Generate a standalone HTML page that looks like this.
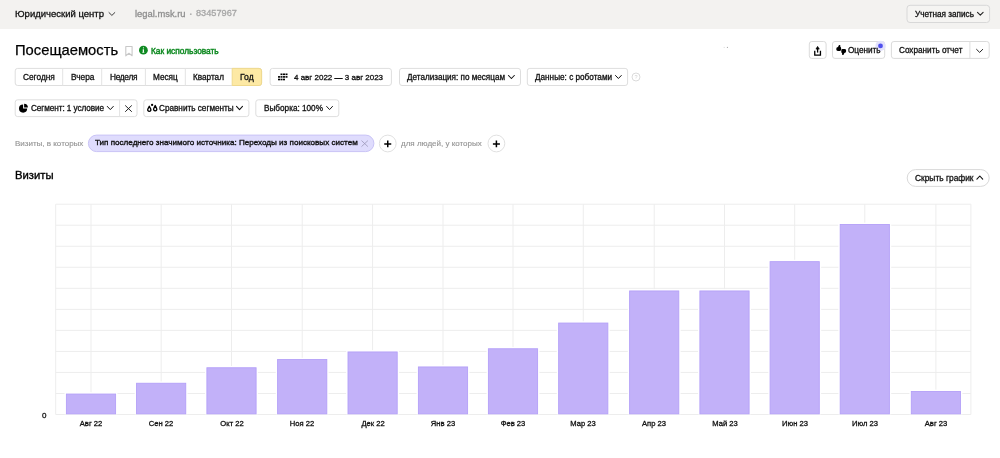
<!DOCTYPE html>
<html><head><meta charset="utf-8"><style>
html,body{margin:0;padding:0;width:1000px;height:458px;overflow:hidden;background:#fff}
body{position:relative;font-family:"Liberation Sans",sans-serif}
.t{position:absolute;white-space:nowrap;will-change:transform}
.b{position:absolute;box-sizing:border-box}
.i{position:absolute;overflow:visible}
</style></head><body>
<div class="b" style="left:0.00px;top:0.00px;width:1000.00px;height:29.00px;background:#f3f2f0;"></div>
<svg class="i" style="left:0;top:0" width="1000" height="458" viewBox="0 0 1000 458"><rect x="907.00" y="5.30" width="82.60" height="17.20" rx="3" fill="#f5f4f2" stroke="#d8d8d8" stroke-width="1.0"/><rect x="809.30" y="41.50" width="16.80" height="16.90" rx="2.5" fill="#fff" stroke="#dbdbdb" stroke-width="1.0"/><rect x="832.50" y="41.50" width="52.20" height="16.90" rx="2.5" fill="#fff" stroke="#dbdbdb" stroke-width="1.0"/><circle cx="880.5" cy="45.9" r="5.1" fill="#e2e1fc"/><rect x="891.40" y="41.50" width="97.80" height="16.90" rx="2.5" fill="#fff" stroke="#dbdbdb" stroke-width="1.0"/><line x1="969.90" y1="41.50" x2="969.90" y2="58.40" stroke="#dedede" stroke-width="1.0"/><rect x="15.20" y="68.40" width="246.40" height="17.10" rx="2.5" fill="#fff" stroke="#dedede" stroke-width="1.0"/><path d="M232.2 68.40 H259.1 A2.5 2.5 0 0 1 261.6 70.90 V83.00 A2.5 2.5 0 0 1 259.1 85.50 H232.2 Z" fill="#fde9a4" stroke="#efd98d" stroke-width="1"/><line x1="62.70" y1="68.40" x2="62.70" y2="85.50" stroke="#e3e3e3" stroke-width="1.0"/><line x1="101.70" y1="68.40" x2="101.70" y2="85.50" stroke="#e3e3e3" stroke-width="1.0"/><line x1="145.40" y1="68.40" x2="145.40" y2="85.50" stroke="#e3e3e3" stroke-width="1.0"/><line x1="185.30" y1="68.40" x2="185.30" y2="85.50" stroke="#e3e3e3" stroke-width="1.0"/><rect x="270.10" y="68.40" width="121.30" height="17.10" rx="2.5" fill="#fff" stroke="#dedede" stroke-width="1.0"/><rect x="399.50" y="68.40" width="121.00" height="17.10" rx="2.5" fill="#fff" stroke="#dedede" stroke-width="1.0"/><rect x="527.30" y="68.40" width="100.30" height="17.10" rx="2.5" fill="#fff" stroke="#dedede" stroke-width="1.0"/><rect x="15.20" y="99.80" width="121.80" height="16.80" rx="2.5" fill="#fff" stroke="#dedede" stroke-width="1.0"/><line x1="119.60" y1="99.80" x2="119.60" y2="116.60" stroke="#e3e3e3" stroke-width="1.0"/><rect x="143.80" y="99.80" width="105.10" height="16.80" rx="2.5" fill="#fff" stroke="#dedede" stroke-width="1.0"/><rect x="255.80" y="99.80" width="83.00" height="16.80" rx="2.5" fill="#fff" stroke="#dedede" stroke-width="1.0"/><rect x="88.40" y="135.10" width="285.50" height="16.50" rx="8.2" fill="#dfdcfd" stroke="#c9c3f6" stroke-width="1.0"/><rect x="907.20" y="169.60" width="82.00" height="16.80" rx="8.4" fill="#fff" stroke="#d9d9d9" stroke-width="1.0"/></svg>
<div class="t" style="left:15.00px;top:8.59px;font-size:9.5px;line-height:9.5px;color:#111;font-weight:400;letter-spacing:0px;-webkit-text-stroke:0.3px #111;">Юридический центр</div>
<div class="t" style="left:134.60px;top:8.81px;font-size:9.4px;line-height:9.4px;color:#8e8e8e;font-weight:400;letter-spacing:0px;-webkit-text-stroke:0.3px #8e8e8e;">legal.msk.ru</div>
<div class="t" style="left:196.00px;top:9.24px;font-size:9.2px;line-height:9.2px;color:#a6a6a6;font-weight:400;letter-spacing:0px;-webkit-text-stroke:0.3px #a6a6a6;">83457967</div>

<div class="t" style="left:914.80px;top:10.60px;font-size:8.2px;line-height:8.2px;color:#111;font-weight:400;letter-spacing:0px;-webkit-text-stroke:0.3px #111;">Учетная запись</div>
<div class="t" style="left:14.90px;top:42.76px;font-size:14.75px;line-height:14.75px;color:#000;font-weight:400;letter-spacing:0px;-webkit-text-stroke:0.25px #000;">Посещаемость</div>
<div class="t" style="left:150.70px;top:46.68px;font-size:8.33px;line-height:8.33px;color:#0f8a22;font-weight:400;letter-spacing:0px;-webkit-text-stroke:0.45px #0f8a22;">Как использовать</div>


<div class="t" style="left:848.00px;top:46.90px;font-size:8.2px;line-height:8.2px;color:#111;font-weight:400;letter-spacing:0px;-webkit-text-stroke:0.3px #111;">Оценить</div>

<div class="t" style="left:899.00px;top:46.90px;font-size:8.2px;line-height:8.2px;color:#111;font-weight:400;letter-spacing:0px;-webkit-text-stroke:0.3px #111;">Сохранить отчет</div>

<div class="t" style="left:23.00px;top:73.48px;font-size:8.3px;line-height:8.3px;color:#111;font-weight:400;letter-spacing:0px;-webkit-text-stroke:0.3px #111;">Сегодня</div>
<div class="t" style="left:70.70px;top:73.48px;font-size:8.3px;line-height:8.3px;color:#111;font-weight:400;letter-spacing:0px;-webkit-text-stroke:0.3px #111;">Вчера</div>
<div class="t" style="left:109.50px;top:73.48px;font-size:8.3px;line-height:8.3px;color:#111;font-weight:400;letter-spacing:-0.3px;-webkit-text-stroke:0.3px #111;">Неделя</div>
<div class="t" style="left:153.10px;top:73.50px;font-size:8.2px;line-height:8.2px;color:#111;font-weight:400;letter-spacing:0px;-webkit-text-stroke:0.3px #111;">Месяц</div>
<div class="t" style="left:193.00px;top:73.50px;font-size:8.2px;line-height:8.2px;color:#111;font-weight:400;letter-spacing:0px;-webkit-text-stroke:0.3px #111;">Квартал</div>
<div class="t" style="left:240.00px;top:73.44px;font-size:8.6px;line-height:8.6px;color:#111;font-weight:400;letter-spacing:0px;-webkit-text-stroke:0.3px #111;">Год</div>

<div class="t" style="left:293.60px;top:73.53px;font-size:8.0px;line-height:8.0px;color:#111;font-weight:400;letter-spacing:0px;-webkit-text-stroke:0.3px #111;">4 авг 2022 — 3 авг 2023</div>

<div class="t" style="left:407.10px;top:73.51px;font-size:8.15px;line-height:8.15px;color:#111;font-weight:400;letter-spacing:0px;-webkit-text-stroke:0.3px #111;">Детализация: по месяцам</div>

<div class="t" style="left:535.10px;top:73.50px;font-size:8.2px;line-height:8.2px;color:#111;font-weight:400;letter-spacing:0px;-webkit-text-stroke:0.3px #111;">Данные: с роботами</div>

<div class="t" style="left:30.70px;top:104.90px;font-size:8.2px;line-height:8.2px;color:#111;font-weight:400;letter-spacing:-0.07px;-webkit-text-stroke:0.3px #111;">Сегмент: 1 условие</div>

<div class="t" style="left:158.70px;top:104.90px;font-size:8.2px;line-height:8.2px;color:#111;font-weight:400;letter-spacing:0px;-webkit-text-stroke:0.3px #111;">Сравнить сегменты</div>

<div class="t" style="left:263.60px;top:104.90px;font-size:8.2px;line-height:8.2px;color:#111;font-weight:400;letter-spacing:0px;-webkit-text-stroke:0.3px #111;">Выборка: 100%</div>
<div class="t" style="left:14.90px;top:139.53px;font-size:8.0px;line-height:8.0px;color:#959595;font-weight:400;letter-spacing:0px;-webkit-text-stroke:0.15px #959595;">Визиты, в которых</div>

<div class="t" style="left:95.10px;top:139.12px;font-size:8.08px;line-height:8.08px;color:#111;font-weight:400;letter-spacing:0px;-webkit-text-stroke:0.36px #111;">Тип последнего значимого источника: Переходы из поисковых систем</div>
<div class="t" style="left:401.10px;top:139.53px;font-size:8.0px;line-height:8.0px;color:#959595;font-weight:400;letter-spacing:0px;-webkit-text-stroke:0.15px #959595;">для людей, у которых</div>
<div class="t" style="left:15.40px;top:170.11px;font-size:11.3px;line-height:11.3px;color:#000;font-weight:400;letter-spacing:0px;-webkit-text-stroke:0.35px #000;">Визиты</div>

<div class="t" style="left:915.00px;top:173.67px;font-size:8.4px;line-height:8.4px;color:#111;font-weight:400;letter-spacing:0px;-webkit-text-stroke:0.3px #111;">Скрыть график</div>
<svg class="i" style="left:0;top:0" width="1000" height="458" viewBox="0 0 1000 458"><line x1="55.7" y1="204.20" x2="970.9" y2="204.20" stroke="#ededed" stroke-width="1"/><line x1="55.7" y1="225.23" x2="970.9" y2="225.23" stroke="#ededed" stroke-width="1"/><line x1="55.7" y1="246.26" x2="970.9" y2="246.26" stroke="#ededed" stroke-width="1"/><line x1="55.7" y1="267.29" x2="970.9" y2="267.29" stroke="#ededed" stroke-width="1"/><line x1="55.7" y1="288.32" x2="970.9" y2="288.32" stroke="#ededed" stroke-width="1"/><line x1="55.7" y1="309.35" x2="970.9" y2="309.35" stroke="#ededed" stroke-width="1"/><line x1="55.7" y1="330.38" x2="970.9" y2="330.38" stroke="#ededed" stroke-width="1"/><line x1="55.7" y1="351.41" x2="970.9" y2="351.41" stroke="#ededed" stroke-width="1"/><line x1="55.7" y1="372.44" x2="970.9" y2="372.44" stroke="#ededed" stroke-width="1"/><line x1="55.7" y1="393.47" x2="970.9" y2="393.47" stroke="#ededed" stroke-width="1"/><line x1="55.7" y1="414.50" x2="970.9" y2="414.50" stroke="#ededed" stroke-width="1"/><line x1="55.7" y1="204.2" x2="55.7" y2="414.5" stroke="#ededed" stroke-width="1"/><line x1="970.9" y1="204.2" x2="970.9" y2="414.5" stroke="#ededed" stroke-width="1"/><line x1="91.00" y1="204.2" x2="91.00" y2="414.5" stroke="#ededed" stroke-width="1"/><line x1="161.15" y1="204.2" x2="161.15" y2="414.5" stroke="#ededed" stroke-width="1"/><line x1="231.50" y1="204.2" x2="231.50" y2="414.5" stroke="#ededed" stroke-width="1"/><line x1="302.20" y1="204.2" x2="302.20" y2="414.5" stroke="#ededed" stroke-width="1"/><line x1="372.60" y1="204.2" x2="372.60" y2="414.5" stroke="#ededed" stroke-width="1"/><line x1="443.00" y1="204.2" x2="443.00" y2="414.5" stroke="#ededed" stroke-width="1"/><line x1="513.00" y1="204.2" x2="513.00" y2="414.5" stroke="#ededed" stroke-width="1"/><line x1="583.25" y1="204.2" x2="583.25" y2="414.5" stroke="#ededed" stroke-width="1"/><line x1="654.20" y1="204.2" x2="654.20" y2="414.5" stroke="#ededed" stroke-width="1"/><line x1="724.50" y1="204.2" x2="724.50" y2="414.5" stroke="#ededed" stroke-width="1"/><line x1="794.70" y1="204.2" x2="794.70" y2="414.5" stroke="#ededed" stroke-width="1"/><line x1="864.80" y1="204.2" x2="864.80" y2="414.5" stroke="#ededed" stroke-width="1"/><line x1="935.90" y1="204.2" x2="935.90" y2="414.5" stroke="#ededed" stroke-width="1"/><rect x="64.55" y="392.20" width="52.90" height="22.10" fill="#fff"/><rect x="66.40" y="394.05" width="49.20" height="19.80" fill="#c2b1f9" stroke="#b4a0f8" stroke-width="0.9"/><rect x="134.70" y="381.40" width="52.90" height="32.90" fill="#fff"/><rect x="136.55" y="383.25" width="49.20" height="30.60" fill="#c2b1f9" stroke="#b4a0f8" stroke-width="0.9"/><rect x="205.05" y="365.90" width="52.90" height="48.40" fill="#fff"/><rect x="206.90" y="367.75" width="49.20" height="46.10" fill="#c2b1f9" stroke="#b4a0f8" stroke-width="0.9"/><rect x="275.75" y="357.70" width="52.90" height="56.60" fill="#fff"/><rect x="277.60" y="359.55" width="49.20" height="54.30" fill="#c2b1f9" stroke="#b4a0f8" stroke-width="0.9"/><rect x="346.15" y="350.10" width="52.90" height="64.20" fill="#fff"/><rect x="348.00" y="351.95" width="49.20" height="61.90" fill="#c2b1f9" stroke="#b4a0f8" stroke-width="0.9"/><rect x="416.55" y="365.10" width="52.90" height="49.20" fill="#fff"/><rect x="418.40" y="366.95" width="49.20" height="46.90" fill="#c2b1f9" stroke="#b4a0f8" stroke-width="0.9"/><rect x="486.55" y="346.90" width="52.90" height="67.40" fill="#fff"/><rect x="488.40" y="348.75" width="49.20" height="65.10" fill="#c2b1f9" stroke="#b4a0f8" stroke-width="0.9"/><rect x="556.80" y="321.20" width="52.90" height="93.10" fill="#fff"/><rect x="558.65" y="323.05" width="49.20" height="90.80" fill="#c2b1f9" stroke="#b4a0f8" stroke-width="0.9"/><rect x="627.75" y="289.10" width="52.90" height="125.20" fill="#fff"/><rect x="629.60" y="290.95" width="49.20" height="122.90" fill="#c2b1f9" stroke="#b4a0f8" stroke-width="0.9"/><rect x="698.05" y="289.10" width="52.90" height="125.20" fill="#fff"/><rect x="699.90" y="290.95" width="49.20" height="122.90" fill="#c2b1f9" stroke="#b4a0f8" stroke-width="0.9"/><rect x="768.25" y="259.80" width="52.90" height="154.50" fill="#fff"/><rect x="770.10" y="261.65" width="49.20" height="152.20" fill="#c2b1f9" stroke="#b4a0f8" stroke-width="0.9"/><rect x="838.35" y="222.60" width="52.90" height="191.70" fill="#fff"/><rect x="840.20" y="224.45" width="49.20" height="189.40" fill="#c2b1f9" stroke="#b4a0f8" stroke-width="0.9"/><rect x="909.45" y="389.60" width="52.90" height="24.70" fill="#fff"/><rect x="911.30" y="391.45" width="49.20" height="22.40" fill="#c2b1f9" stroke="#b4a0f8" stroke-width="0.9"/></svg>
<div class="t" style="left:61.00px;width:60px;text-align:center;top:419.6px;font-size:7.6px;line-height:7.6px;color:#111;-webkit-text-stroke:0.3px #111">Авг 22</div>
<div class="t" style="left:131.15px;width:60px;text-align:center;top:419.6px;font-size:7.6px;line-height:7.6px;color:#111;-webkit-text-stroke:0.3px #111">Сен 22</div>
<div class="t" style="left:201.50px;width:60px;text-align:center;top:419.6px;font-size:7.6px;line-height:7.6px;color:#111;-webkit-text-stroke:0.3px #111">Окт 22</div>
<div class="t" style="left:272.20px;width:60px;text-align:center;top:419.6px;font-size:7.6px;line-height:7.6px;color:#111;-webkit-text-stroke:0.3px #111">Ноя 22</div>
<div class="t" style="left:342.60px;width:60px;text-align:center;top:419.6px;font-size:7.6px;line-height:7.6px;color:#111;-webkit-text-stroke:0.3px #111">Дек 22</div>
<div class="t" style="left:413.00px;width:60px;text-align:center;top:419.6px;font-size:7.6px;line-height:7.6px;color:#111;-webkit-text-stroke:0.3px #111">Янв 23</div>
<div class="t" style="left:483.00px;width:60px;text-align:center;top:419.6px;font-size:7.6px;line-height:7.6px;color:#111;-webkit-text-stroke:0.3px #111">Фев 23</div>
<div class="t" style="left:553.25px;width:60px;text-align:center;top:419.6px;font-size:7.6px;line-height:7.6px;color:#111;-webkit-text-stroke:0.3px #111">Мар 23</div>
<div class="t" style="left:624.20px;width:60px;text-align:center;top:419.6px;font-size:7.6px;line-height:7.6px;color:#111;-webkit-text-stroke:0.3px #111">Апр 23</div>
<div class="t" style="left:694.50px;width:60px;text-align:center;top:419.6px;font-size:7.6px;line-height:7.6px;color:#111;-webkit-text-stroke:0.3px #111">Май 23</div>
<div class="t" style="left:764.70px;width:60px;text-align:center;top:419.6px;font-size:7.6px;line-height:7.6px;color:#111;-webkit-text-stroke:0.3px #111">Июн 23</div>
<div class="t" style="left:834.80px;width:60px;text-align:center;top:419.6px;font-size:7.6px;line-height:7.6px;color:#111;-webkit-text-stroke:0.3px #111">Июл 23</div>
<div class="t" style="left:905.90px;width:60px;text-align:center;top:419.6px;font-size:7.6px;line-height:7.6px;color:#111;-webkit-text-stroke:0.3px #111">Авг 23</div>
<div class="t" style="left:42.20px;top:411.53px;font-size:8.0px;line-height:8.0px;color:#111;font-weight:400;letter-spacing:0px;-webkit-text-stroke:0.3px #111;">0</div>
<svg class="i" style="left:0;top:0" width="1000" height="458" viewBox="0 0 1000 458"><path d="M109.00 12.60 L111.90 15.40 L114.80 12.60" fill="none" stroke="#333" stroke-width="0.95" stroke-linecap="round" stroke-linejoin="round"/><circle cx="190.8" cy="14.2" r="0.9" fill="#b0b0b0"/><path d="M977.50 12.30 L980.30 15.10 L983.10 12.30" fill="none" stroke="#222" stroke-width="1.1" stroke-linecap="round" stroke-linejoin="round"/><path d="M125.8 46.5 H132.1 V55.8 L128.95 53.3 L125.8 55.8 Z" fill="none" stroke="#c8c8c8" stroke-width="1.1" stroke-linejoin="round"/><circle cx="143.4" cy="50.2" r="4.4" fill="#0f8a22"/><path d="M142.75 49.2 H143.95 V51.9 H144.3 V52.8 H142.35 V51.9 H142.75 Z" fill="#fff"/><circle cx="143.45" cy="47.85" r="0.6" fill="#fff"/><path d="M817.6 46.4 L815.95 49.1 H819.25 Z" fill="#000" stroke="#000" stroke-width="0.7" stroke-linejoin="round"/><path d="M817.6 48.3 V52.6" stroke="#000" stroke-width="1.3"/><path d="M814.75 50.8 V55.05 H820.45 V50.8" fill="none" stroke="#000" stroke-width="1.3"/><path d="M836.3 48.7 Q836.3 46.9 838.0 46.9 L839.0 45.1 Q839.9 44.6 840.4 45.4 L840.3 46.9 Q841.1 47.0 841.1 48.0 V49.8 Q841.1 50.9 839.9 50.9 H837.9 Q836.3 50.9 836.3 49.5 Z" fill="#000"/><path d="M836.3 48.7 Q836.3 46.9 838.0 46.9 L839.0 45.1 Q839.9 44.6 840.4 45.4 L840.3 46.9 Q841.1 47.0 841.1 48.0 V49.8 Q841.1 50.9 839.9 50.9 H837.9 Q836.3 50.9 836.3 49.5 Z" fill="#000" transform="translate(1682.4,100.0) scale(-1)"/><circle cx="880.5" cy="45.9" r="2.4" fill="#5050ee"/><path d="M976.60 49.40 L979.65 52.40 L982.70 49.40" fill="none" stroke="#222" stroke-width="1.0" stroke-linecap="round" stroke-linejoin="round"/><rect x="723.7" y="46.9" width="1" height="1" fill="#d8d8d8"/><rect x="726.9" y="46.9" width="1.1" height="1.1" fill="#b0b0b0"/><rect x="280.50" y="73.50" width="2" height="1.6" fill="#000"/><rect x="283.00" y="73.50" width="2" height="1.6" fill="#000"/><rect x="285.50" y="73.50" width="2" height="1.6" fill="#000"/><rect x="278.00" y="76.10" width="2" height="1.6" fill="#000"/><rect x="280.50" y="76.10" width="2" height="1.6" fill="#000"/><rect x="283.00" y="76.10" width="2" height="1.6" fill="#000"/><rect x="285.50" y="76.10" width="2" height="1.6" fill="#000"/><rect x="278.00" y="78.70" width="2" height="1.6" fill="#000"/><rect x="280.50" y="78.70" width="2" height="1.6" fill="#000"/><rect x="283.00" y="78.70" width="2" height="1.6" fill="#000"/><path d="M508.50 75.50 L511.40 78.50 L514.30 75.50" fill="none" stroke="#111" stroke-width="1.05" stroke-linecap="round" stroke-linejoin="round"/><path d="M615.50 75.50 L618.40 78.50 L621.30 75.50" fill="none" stroke="#111" stroke-width="1.0" stroke-linecap="round" stroke-linejoin="round"/><circle cx="636" cy="77" r="4" fill="none" stroke="#d6d6d6" stroke-width="0.9"/><text x="636" y="79.2" font-size="5.5" text-anchor="middle" fill="#d0d0d0" font-family="Liberation Sans">?</text><path d="M23.1 104.5 A4.1 4.1 0 1 0 27.2 108.6 H23.1 Z" fill="#000"/><path d="M24.1 103.8 A3.8 3.8 0 0 1 27.9 107.6 H24.1 Z" fill="#000"/><path d="M107.30 106.40 L110.30 109.60 L113.30 106.40" fill="none" stroke="#111" stroke-width="1.0" stroke-linecap="round" stroke-linejoin="round"/><path d="M125.5 105.7 L131.5 111.5 M131.5 105.7 L125.5 111.5" stroke="#1a1a1a" stroke-width="0.95" stroke-linecap="round"/><path d="M149.3 106.3 L147.9 109 C147.3 110.4 148.1 111.3 149.3 111.3 C150.5 111.3 151.3 110.4 150.7 109 Z" fill="none" stroke="#000" stroke-width="1.35" stroke-linejoin="round"/><path d="M155.2 105.5 L153.8 108.5 C153.2 109.9 154 110.8 155.2 110.8 C156.4 110.8 157.2 109.9 156.6 108.5 Z" fill="none" stroke="#000" stroke-width="1.35" stroke-linejoin="round"/><circle cx="152.1" cy="104.9" r="1.15" fill="#000"/><path d="M236.50 106.40 L239.50 109.60 L242.50 106.40" fill="none" stroke="#111" stroke-width="1.05" stroke-linecap="round" stroke-linejoin="round"/><path d="M326.60 106.40 L329.55 109.60 L332.50 106.40" fill="none" stroke="#111" stroke-width="0.95" stroke-linecap="round" stroke-linejoin="round"/><path d="M361.5 140.6 L367.9 146.6 M367.9 140.6 L361.5 146.6" stroke="#9a97b8" stroke-width="0.8"/><circle cx="387.75" cy="143.5" r="8.4" fill="#fff" stroke="#dcdcdc" stroke-width="0.9"/><path d="M384.25 143.9 H391.25 M387.75 140.5 V147.3" stroke="#000" stroke-width="1.5"/><circle cx="496.4" cy="143.5" r="8.4" fill="#fff" stroke="#dcdcdc" stroke-width="0.9"/><path d="M492.90 143.9 H499.90 M496.40 140.5 V147.3" stroke="#000" stroke-width="1.5"/><path d="M976.90 179.20 L979.80 176.00 L982.70 179.20" fill="none" stroke="#111" stroke-width="1.1" stroke-linecap="round" stroke-linejoin="round"/></svg>
</body></html>
